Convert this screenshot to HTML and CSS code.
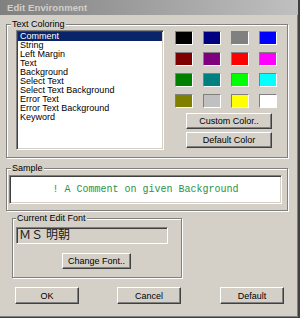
FILE: index.html
```html
<!DOCTYPE html>
<html lang="en">

<head>
   <meta charset="UTF-8">
   <title>Edit Environment</title>
   <link rel="stylesheet" href="styles.css">
</head>

<body>
   <div class="window">
      <div class="titlebar">Edit Environment</div>

      <div class="group coloring">
         <span class="group-label">Text Coloring</span>
         <ul class="listbox">
            <li class="selected">Comment</li>
            <li>String</li>
            <li>Left Margin</li>
            <li>Text</li>
            <li>Background</li>
            <li>Select Text</li>
            <li>Select Text Background</li>
            <li>Error Text</li>
            <li>Error Text Background</li>
            <li>Keyword</li>
         </ul>
         <div class="palette">
            <div class="swatches">
               <span class="swatch black"></span>
               <span class="swatch navy"></span>
               <span class="swatch gray"></span>
               <span class="swatch blue"></span>
               <span class="swatch maroon"></span>
               <span class="swatch purple"></span>
               <span class="swatch red"></span>
               <span class="swatch magenta"></span>
               <span class="swatch green"></span>
               <span class="swatch teal"></span>
               <span class="swatch lime"></span>
               <span class="swatch cyan"></span>
               <span class="swatch olive"></span>
               <span class="swatch silver"></span>
               <span class="swatch yellow"></span>
               <span class="swatch white"></span>
            </div>
            <button class="btn palette-btn">Custom Color..</button>
            <button class="btn palette-btn">Default Color</button>
         </div>
      </div>

      <div class="group sample">
         <span class="group-label">Sample</span>
         <div class="sample-box">! A Comment on given Background</div>
      </div>

      <div class="group font">
         <span class="group-label">Current Edit Font</span>
         <div class="font-field">ＭＳ 明朝</div>
         <button class="btn change-font">Change Font..</button>
      </div>

      <div class="actions">
         <button class="btn action ok">OK</button>
         <button class="btn action cancel">Cancel</button>
         <button class="btn action default">Default</button>
      </div>
   </div>
</body>

</html>
```

FILE: styles.css
```css
body {
   margin: 0;
   font-family: "Liberation Sans", Arial, sans-serif;
   font-size: 9px;
   color: #000;
   background: #d4d0c8;
}

.window {
   width: 300px;
   height: 318px;
   box-sizing: border-box;
   background: #d4d0c8;
   border-right: 2px solid #404040;
   border-bottom: 1px solid #404040;
   box-shadow: inset -1px -1px 0 #808080;
   overflow: hidden;
}

.titlebar {
   height: 15px;
   line-height: 15px;
   padding-left: 7px;
   background: linear-gradient(to right, #808080 0%, #c0c0c0 100%);
   color: #d4d0c8;
   font-size: 9.5px;
   font-weight: bold;
   letter-spacing: 0.1px;
}

/* etched group boxes */
.group {
   position: relative;
   box-sizing: border-box;
   border: 1px solid #808080;
   box-shadow: inset 1px 1px 0 #fff, 1px 1px 0 #fff;
}

.group-label {
   position: absolute;
   top: -6px;
   left: 4px;
   padding: 0 1px;
   line-height: 11px;
   background: #d4d0c8;
}

/* sunken frame */
.listbox,
.sample-box,
.font-field {
   box-sizing: border-box;
   border: 1px solid;
   border-color: #808080 #fff #fff #808080;
   box-shadow: inset 1px 1px 0 #404040, inset -1px -1px 0 #d4d0c8;
}

.btn {
   box-sizing: border-box;
   margin: 0;
   padding: 0;
   font-family: inherit;
   font-size: 9px;
   color: #000;
   background: #d4d0c8;
   border: 1px solid;
   border-color: #fff #404040 #404040 #fff;
   box-shadow: inset -1px -1px 0 #808080;
   border-radius: 0;
}

/* Text Coloring */
.coloring {
   display: flex;
   margin: 9px 0 0 6px;
   width: 282px;
   height: 134px;
   padding: 5px 0 0 9px;
}

.listbox {
   width: 148px;
   height: 120px;
   margin: 0;
   padding: 1px 1px;
   list-style: none;
   background: #fff;
}

.listbox li {
   height: 9px;
   line-height: 9px;
   padding-left: 2px;
   white-space: nowrap;
}

.listbox .selected {
   background: #0a246a;
   color: #fff;
}

.palette {
   display: flex;
   flex-direction: column;
   margin: 1px 0 0 11px;
}

.swatches {
   display: grid;
   grid-template-columns: repeat(4, 18px);
   grid-auto-rows: 14px;
   column-gap: 10px;
   row-gap: 7px;
}

.swatch {
   box-sizing: border-box;
   border: 1px solid;
   border-color: #808080 #fff #fff #808080;
}

.black { background: #000; }
.navy { background: #000080; }
.gray { background: #808080; }
.blue { background: #0000ff; }
.maroon { background: #800000; }
.purple { background: #800080; }
.red { background: #ff0000; }
.magenta { background: #ff00ff; }
.green { background: #008000; }
.teal { background: #008080; }
.lime { background: #00ff00; }
.cyan { background: #00ffff; }
.olive { background: #808000; }
.silver { background: #c0c0c0; }
.yellow { background: #ffff00; }
.white { background: #fff; }

.palette-btn {
   width: 86px;
   height: 16px;
   margin: 5px 0 0 11px;
}

.palette-btn + .palette-btn {
   margin-top: 3px;
}

/* Sample */
.sample {
   margin: 10px 0 0 6px;
   width: 282px;
   height: 43px;
   padding: 6px 0 0 2px;
}

.sample-box {
   width: 273px;
   height: 29px;
   line-height: 27px;
   text-align: center;
   background: #fff;
   color: #2a9444;
   font-family: "Liberation Mono", "Courier New", monospace;
   font-size: 10px;
}

/* Current Edit Font */
.font {
   margin: 7px 0 0 12px;
   width: 170px;
   height: 60px;
   padding: 8px 0 0 3px;
}

.font .group-label {
   left: 3px;
}

.font-field {
   width: 152px;
   height: 17px;
   line-height: 15px;
   padding-left: 2px;
   font-family: "Liberation Serif", "Noto Sans CJK JP", serif;
   font-size: 12px;
   color: #202020;
}

.change-font {
   display: block;
   width: 69px;
   height: 16px;
   margin: 9px 0 0 46px;
}

/* bottom buttons */
.actions {
   display: flex;
   margin: 9px 0 0 15px;
}

.action {
   width: 64px;
   height: 17px;
}

.cancel {
   margin-left: 38px;
}

.default {
   margin-left: 39px;
}
```
